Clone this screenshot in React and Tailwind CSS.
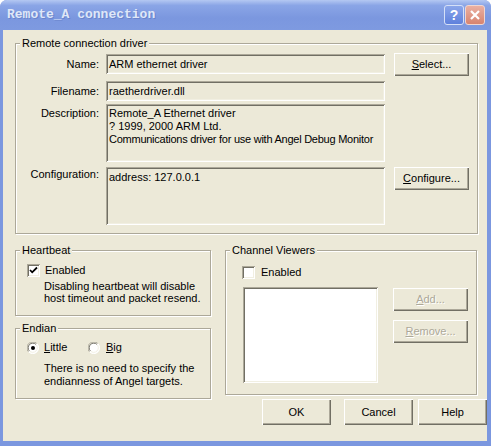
const raised = "bg-[#ece9d8] shadow-[inset_1px_1px_0_#ffffff,inset_-1px_-1px_0_#716f64,inset_-2px_-2px_0_#aca899]";
const sunken = "shadow-[inset_1px_1px_0_#aca899,inset_-1px_-1px_0_#ffffff,inset_2px_2px_0_#716f64,inset_-2px_-2px_0_#f1efe2]";

function Btn({ children, className = "", disabled }) {
  return (
    <div className={`${raised} h-[23px] w-[75px] flex items-center justify-center leading-[13px] ${disabled ? "text-[#aca899] [text-shadow:1px_1px_0_#ffffff]" : ""} ${className}`}>
      {children}
    </div>
  );
}

function Group({ title, className = "", children }) {
  return (
    <fieldset className={`border border-[#aca899] shadow-[inset_1px_1px_0_#ffffff,1px_1px_0_#ffffff] ${className}`}>
      <legend className="ml-[4px] px-[2px] bg-[#ece9d8] leading-[13px]">{title}</legend>
      {children}
    </fieldset>
  );
}

function Check({ checked }) {
  return (
    <div className={`w-[13px] h-[13px] bg-white shrink-0 ${sunken}`}>
      {checked && (
        <svg width="13" height="13" viewBox="0 0 13 13">
          <path d="M3 6 L5.2 8.3 L10 3.5" fill="none" stroke="#000" strokeWidth="1.8" />
        </svg>
      )}
    </div>
  );
}

function Radio({ on }) {
  return (
    <svg width="12" height="12" viewBox="0 0 12 12" className="shrink-0">
      <circle cx="6" cy="6" r="5.5" fill="#ffffff" />
      <path d="M1.6 9.9 A5.5 5.5 0 0 1 9.9 1.6" fill="none" stroke="#aca899" />
      <path d="M2.5 9 A4.5 4.5 0 0 1 9 2.5" fill="none" stroke="#716f64" />
      <path d="M9.9 1.6 A5.5 5.5 0 0 1 1.6 9.9" fill="none" stroke="#ffffff" />
      <path d="M9 2.5 A4.5 4.5 0 0 1 2.5 9" fill="none" stroke="#f1efe2" />
      {on && <circle cx="6" cy="6" r="2" fill="#000000" />}
    </svg>
  );
}

function TitleBar() {
  return (
    <div className="h-[30px] flex items-center shrink-0 bg-[linear-gradient(to_bottom,#b4c8f2,#8aa5e6_18%,#7b97df_60%,#7e9ae0)]">
      <span className="ml-[7px] font-['Liberation_Mono',monospace] font-bold text-[13px] text-[#dfe7f8] [text-shadow:1px_1px_0_#6a84cc]">
        Remote_A connection
      </span>
      <div className="ml-auto mr-[6px] flex gap-[1px]">
        <div className="w-[20px] h-[20px] rounded-[3px] border border-[#d5e0f7] bg-[linear-gradient(to_bottom,#8ba6ea,#5f81dc)] flex items-center justify-center text-white font-bold text-[14px] font-['Liberation_Sans',sans-serif]">
          ?
        </div>
        <div className="w-[20px] h-[20px] rounded-[3px] border border-[#f0d6cf] bg-[linear-gradient(to_bottom,#eab0a2,#d7846f)] flex items-center justify-center">
          <svg width="12" height="12" viewBox="0 0 12 12">
            <path d="M2 2 L10 10 M10 2 L2 10" stroke="#ffffff" strokeWidth="2.2" />
          </svg>
        </div>
      </div>
    </div>
  );
}

export default function App() {
  return (
    <div className="w-[491px] h-[446px] bg-white font-['Liberation_Sans',Arial,sans-serif] text-[11px] text-black">
      <div className="w-full h-full flex flex-col rounded-t-[7px] overflow-hidden bg-[#7b97df]">
        <TitleBar />
        <div className="flex-1 ml-[3px] mr-[4px] mb-[5px] bg-[#ece9d8] flex flex-col">
          <Group title="Remote connection driver" className="mt-[7px] ml-[12px] w-[463px] pb-[8px]">
            <div className="flex items-start mt-[3px]">
              <div className="w-[84px] text-right pr-[1px] leading-[13px] mt-[5px]">Name:</div>
              <div className={`ml-[6px] w-[279px] h-[20px] mt-[1px] flex items-center pl-[3px] leading-[13px] ${sunken}`}>ARM ethernet driver</div>
              <Btn className="ml-[9px]"><span><span className="underline">S</span>elect...</span></Btn>
            </div>
            <div className="flex items-start mt-[5px]">
              <div className="w-[84px] text-right pr-[1px] leading-[20px]">Filename:</div>
              <div className={`ml-[6px] w-[279px] h-[20px] flex items-center pl-[3px] leading-[13px] ${sunken}`}>raetherdriver.dll</div>
            </div>
            <div className="flex items-start mt-[3px]">
              <div className="w-[84px] text-right pr-[1px] leading-[13px] mt-[3px]">Description:</div>
              <div className={`ml-[6px] w-[279px] h-[58px] pt-[3px] pl-[3px] leading-[13px] whitespace-nowrap overflow-hidden ${sunken}`}>
                <div>Remote_A Ethernet driver</div>
                <div>? 1999, 2000 ARM Ltd.</div>
                <div className="tracking-[-0.25px]">Communications driver for use with Angel Debug Monitor</div>
              </div>
            </div>
            <div className="flex items-start mt-[5px]">
              <div className="w-[84px] text-right pr-[1px] leading-[13px] mt-[1px]">Configuration:</div>
              <div className={`ml-[6px] w-[279px] h-[58px] pt-[4px] pl-[3px] leading-[13px] ${sunken}`}>address: 127.0.0.1</div>
              <Btn className="ml-[9px]"><span><span className="underline">C</span>onfigure...</span></Btn>
            </div>
          </Group>

          <div className="flex mt-[10px]">
            <div className="ml-[12px] w-[196px] flex flex-col">
              <Group title="Heartbeat" className="pb-[11px]">
                <div className="flex items-center mt-[7px] ml-[11px]">
                  <Check checked />
                  <span className="ml-[5px] leading-[13px]">Enabled</span>
                </div>
                <div className="ml-[28px] mt-[3px] leading-[12px]">
                  <div>Disabling heartbeat will disable</div>
                  <div>host timeout and packet resend.</div>
                </div>
              </Group>
              <Group title="Endian" className="mt-[6px] pb-[10px]">
                <div className="flex items-center mt-[6px] ml-[11px]">
                  <div className="w-[61px] flex items-center">
                    <Radio on />
                    <span className="ml-[5px] leading-[13px]"><span className="underline">L</span>ittle</span>
                  </div>
                  <Radio />
                  <span className="ml-[6px] leading-[13px]"><span className="underline">B</span>ig</span>
                </div>
                <div className="ml-[28px] mt-[8px] leading-[13px]">
                  <div>There is no need to specify the</div>
                  <div>endianness of Angel targets.</div>
                </div>
              </Group>
            </div>

            <Group title="Channel Viewers" className="ml-[14px] w-[252px] self-start pb-[11px]">
              <div className="flex items-center mt-[9px] ml-[16px]">
                <Check />
                <span className="ml-[6px] leading-[13px]">Enabled</span>
              </div>
              <div className="flex items-start mt-[8px]">
                <div className={`ml-[17px] w-[135px] h-[96px] bg-white ${sunken}`} />
                <div className="ml-[15px] mt-[1px] flex flex-col gap-[9px]">
                  <Btn disabled><span><span className="underline">A</span>dd...</span></Btn>
                  <Btn disabled><span><span className="underline">R</span>emove...</span></Btn>
                </div>
              </div>
            </Group>
          </div>

          <div className="flex">
            <Btn className="ml-[259px] w-[60px] h-[26px]">OK</Btn>
            <Btn className="ml-[13px] w-[70px] h-[26px]">Cancel</Btn>
            <Btn className="ml-[5px] w-[65px] h-[26px]">Help</Btn>
          </div>
        </div>
      </div>
    </div>
  );
}
